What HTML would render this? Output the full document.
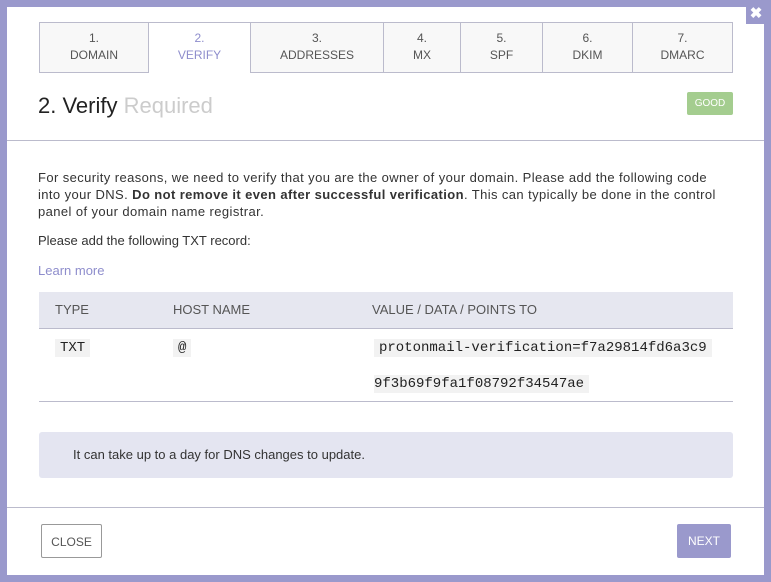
<!DOCTYPE html>
<html><head><style>
body{margin:0;width:771px;height:582px;background:#9a99cc;font-family:"Liberation Sans",sans-serif;position:relative;overflow:hidden;color:#333}
.modal{position:absolute;left:7px;top:7px;width:757px;height:568px;background:#fff}
.x{position:absolute;left:746px;top:4px;width:20px;height:20px;background:#9a99cc;color:#fff;font-weight:bold;font-size:15px;text-align:center;line-height:19px}
.tabs{position:absolute;left:32px;top:15px;width:692px;height:49px;border:1px solid #bbbbcc;display:flex;background:#f8f8f8}
.tabs div{border-left:1px solid #bbbbcc;text-align:center;font-size:12px;color:#555;padding-top:7px;line-height:17px;box-sizing:border-box}
.tabs div:first-child{border-left:none}
.tabs .act{background:#fff;color:#8e8dcc;height:50px}
h2{position:absolute;left:31px;top:86px;margin:0;font-weight:normal;font-size:22px;color:#222}
h2 span{color:#ccc}
.good{position:absolute;left:680px;top:85px;width:46px;height:23px;background:#a4cd8f;color:#fff;font-size:10px;line-height:23px;text-align:center;border-radius:2px}
.hr{position:absolute;left:0;width:757px;height:1px;background:#bbbbcc}
p{position:absolute;left:31px;margin:0;font-size:13px;line-height:17px;width:720px;white-space:nowrap}
p.w{letter-spacing:0.4px}
a{color:#8e8dcc}
.th{position:absolute;left:32px;top:285px;width:694px;height:36px;background:#e6e7f0;border-bottom:1px solid #bbbbcc;font-size:13px;color:#555}
.th span,.td{position:absolute}
code{font-family:"Liberation Mono",monospace;font-size:14px;background:#f2f2f2;padding:1px 5px;color:#222}
.note{position:absolute;left:32px;top:425px;width:694px;height:46px;background:#e4e5f1;border-radius:3px;font-size:13px;line-height:46px;text-indent:34px}
.btn{position:absolute;top:517px;height:34px;font-size:12px;line-height:34px;text-align:center;box-sizing:border-box;border-radius:2px}
</style></head><body>
<div class="modal">
<div class="tabs">
<div style="width:108px">1.<br>DOMAIN</div>
<div class="act" style="width:102px">2.<br>VERIFY</div>
<div style="width:133px">3.<br>ADDRESSES</div>
<div style="width:77px">4.<br>MX</div>
<div style="width:82px">5.<br>SPF</div>
<div style="width:90px">6.<br>DKIM</div>
<div style="width:100px">7.<br>DMARC</div>
</div>
<h2>2. Verify <span>Required</span></h2>
<div class="good">GOOD</div>
<div class="hr" style="top:133px"></div>
<p class="w" style="top:162px">For security reasons, we need to verify that you are the owner of your domain. Please add the following code<br>into your DNS. <b>Do not remove it even after successful verification</b>. This can typically be done in the control<br>panel of your domain name registrar.</p>
<p style="top:225px">Please add the following TXT record:</p>
<p style="top:255px"><a>Learn more</a></p>
<div class="th"><span style="left:16px;top:10px">TYPE</span><span style="left:134px;top:10px">HOST NAME</span><span style="left:333px;top:10px">VALUE / DATA / POINTS TO</span></div>
<div class="td" style="left:48px;top:331px"><code>TXT</code></div>
<div class="td" style="left:166px;top:331px"><code>@</code></div>
<div class="td" style="left:367px;top:331px;white-space:nowrap"><code>protonmail-verification=f7a29814fd6a3c9</code></div>
<div class="td" style="left:367px;top:367px;white-space:nowrap"><code style="padding-left:0">9f3b69f9fa1f08792f34547ae </code></div>
<div class="hr" style="top:394px;left:32px;width:694px"></div>
<div class="note">It can take up to a day for DNS changes to update.</div>
<div class="hr" style="top:500px"></div>
<div class="btn" style="left:34px;width:61px;border:1px solid #999;color:#555">CLOSE</div>
<div class="btn" style="left:670px;width:54px;background:#9a99cc;color:#fff">NEXT</div>
</div>
<div class="x">✖</div>
</body></html>
